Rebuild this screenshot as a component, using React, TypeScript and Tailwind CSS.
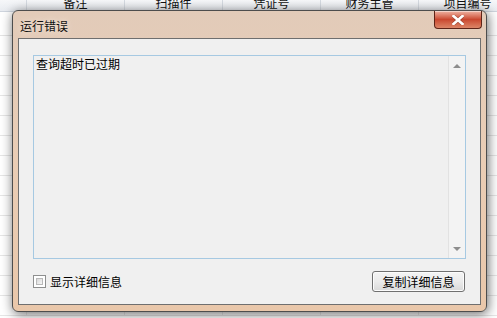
import React from 'react'

const CJK = "font-['Noto_Sans_CJK_SC','Microsoft_YaHei',sans-serif]"

const columns = [
  { w: 'w-[27px]', label: '' },
  { w: 'w-[98px]', label: '备注' },
  { w: 'w-[98px]', label: '扫描件' },
  { w: 'w-[98px]', label: '凭证号' },
  { w: 'w-[98px]', label: '财务主管' },
  { w: 'w-[98px]', label: '项目编号' },
]

function GridBackground() {
  return (
    <div className="flex flex-col w-full h-full bg-white">
      {/* header strip, mostly scrolled off */}
      <div className="flex h-[12px] overflow-hidden bg-gradient-to-b from-[#f6f7f9] to-[#e9ecf1] border-b border-[#cfd5de]">
        {columns.map((c, i) => (
          <div
            key={i}
            className={`${c.w} shrink-0 flex justify-center border-r border-[#d5dae1] text-[12px] leading-[12px] text-[#111] -mt-[3px]`}
          >
            {c.label}
          </div>
        ))}
      </div>
      <div className="h-[24px] shrink-0 border-b border-[#e4e4e4]" />
      {Array.from({ length: 14 }).map((_, r) => (
        <div key={r} className="flex h-[20px] shrink-0 border-b border-[#e6e6e6]">
          {columns.map((c, i) => (
            <div key={i} className={`${c.w} shrink-0 border-r border-[#ececec]`} />
          ))}
        </div>
      ))}
    </div>
  )
}

function Checkbox() {
  return (
    <span className="w-[13px] h-[13px] border border-[#8e8f8f] bg-white p-[2px] flex">
      <span className="flex-1 border border-[#b9b9b9] bg-gradient-to-br from-[#d8d8d8] to-[#f7f7f7]" />
    </span>
  )
}

function ErrorDialog() {
  return (
    <div className="absolute left-[12px] top-[10px] w-[475px] h-[302px] rounded-[6px] border border-[#4d4d4d] bg-gradient-to-b from-[#e2cbb9] via-[#eacdb5] to-[#e9c7aa] shadow-[1px_2px_12px_rgba(0,0,0,0.6)] flex flex-col px-[5px] pb-[6px]">
      {/* title bar */}
      <div className="h-[27px] flex items-start justify-between">
        <span className={`${CJK} text-[12px] leading-[12px] text-[#101010] mt-[9px] ml-[2px] [text-shadow:0_0_6px_rgba(255,245,235,0.9)]`}>
          运行错误
        </span>
        <button className="w-[48px] h-[18px] -mr-[1px] rounded-b-[4px] border border-t-0 border-[#5e2418] bg-gradient-to-b from-[#eeb3a3] via-[#c9472f] to-[#dc8567] flex items-center justify-center shadow-[inset_0_1px_0_rgba(255,255,255,0.45)]">
          <svg width="12" height="10" viewBox="0 0 12 10">
            <path
              d="M1.5 1 L10.5 9 M10.5 1 L1.5 9"
              stroke="#4a1a12"
              strokeWidth="3.8"
              strokeLinecap="square"
              fill="none"
              opacity="0.35"
            />
            <path
              d="M1.5 1 L10.5 9 M10.5 1 L1.5 9"
              stroke="#ffffff"
              strokeWidth="2.6"
              strokeLinecap="square"
              fill="none"
            />
          </svg>
        </button>
      </div>

      {/* client area */}
      <div className="flex-1 border border-[#6f6f6f] bg-[#f0f0f0] flex flex-col pt-[16px] px-[14px]">
        <div className="h-[204px] border border-[#a6c9e2] bg-[#f0f0f0] flex">
          <div className={`flex-1 ${CJK} text-[12px] leading-[16px] text-black pl-[2px]`}>
            查询超时已过期
          </div>
          <div className="w-[17px] border-l border-[#e2e2e2] bg-[#f3f3f3] flex flex-col items-center justify-between pt-[8px] pb-[7px]">
            <svg width="8" height="4" viewBox="0 0 8 4">
              <path d="M0 4 L4 0 L8 4 Z" fill="#8d8d8d" />
            </svg>
            <svg width="8" height="4" viewBox="0 0 8 4">
              <path d="M0 0 L8 0 L4 4 Z" fill="#8d8d8d" />
            </svg>
          </div>
        </div>

        <div className="flex items-center justify-between mt-[12px] pr-[1px]">
          <label className="flex items-center gap-[4px]">
            <Checkbox />
            <span className={`${CJK} text-[12px] leading-[14px] text-black`}>显示详细信息</span>
          </label>
          <button
            className={`w-[93px] h-[21px] rounded-[3px] border border-[#707070] bg-gradient-to-b from-[#f4f4f4] via-[#ebebeb] to-[#d9d9d9] shadow-[inset_0_0_0_1px_#fcfcfc] ${CJK} text-[12px] leading-[14px] text-black`}
          >
            复制详细信息
          </button>
        </div>
      </div>
    </div>
  )
}

export default function App() {
  return (
    <div className={`relative w-[497px] h-[318px] overflow-hidden ${CJK}`}>
      <GridBackground />
      <ErrorDialog />
    </div>
  )
}
